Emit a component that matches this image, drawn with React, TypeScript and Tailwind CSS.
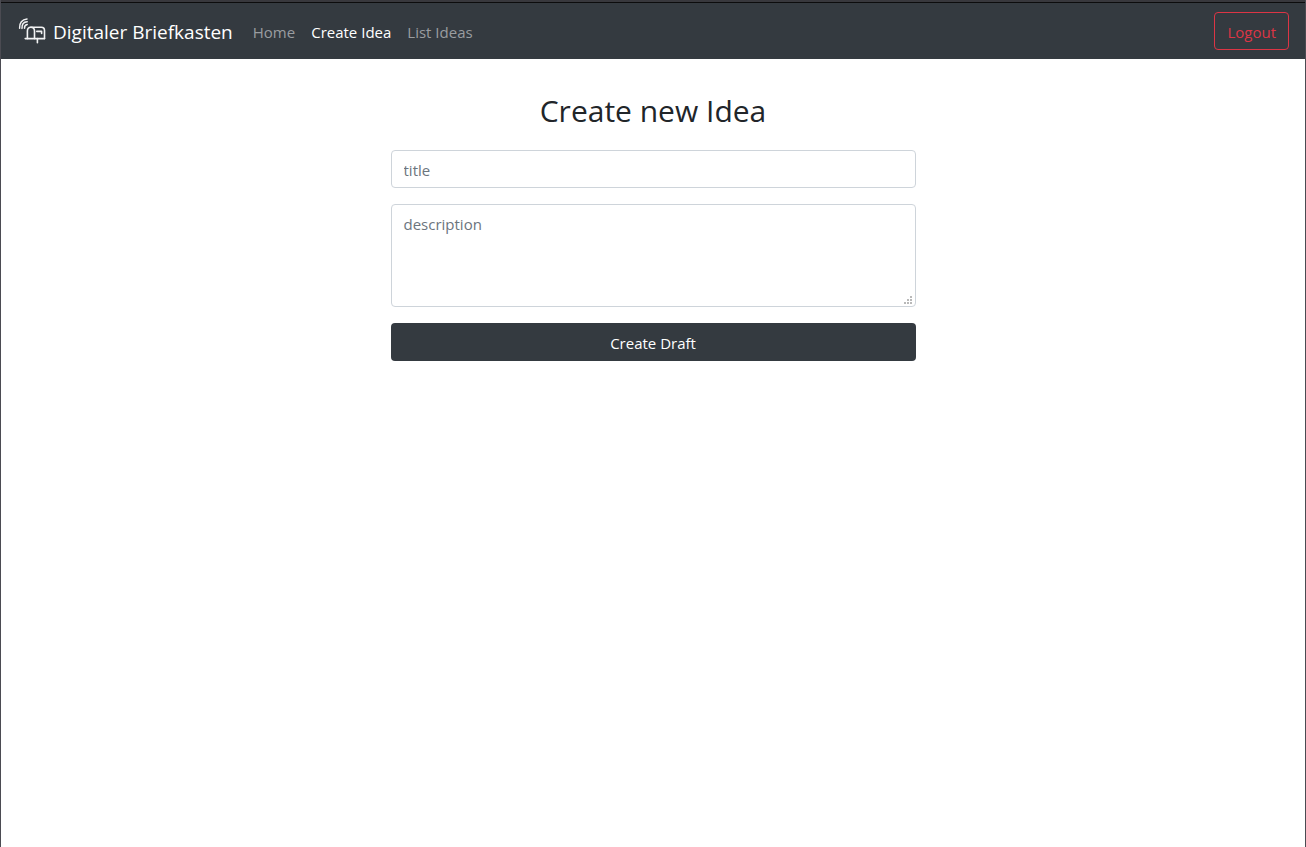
import React from "react";

function MailboxLogo() {
  return (
    <svg
      className="h-[30px] w-[30px] shrink-0"
      viewBox="0 0 30 30"
      fill="none"
      stroke="#f1f2f3"
      strokeLinecap="round"
      strokeLinejoin="round"
      aria-hidden="true"
    >
      <g strokeWidth="1.5">
        <path d="M2.6 12.2C2.2 7 5.2 3.3 10 3" />
        <path d="M5 12.4C4.8 8.6 6.8 6 10.2 5.8" />
        <path d="M7.5 12.2C7.4 10.2 8.4 8.8 10.2 8.5" />
      </g>
      <g strokeWidth="1.6">
        <path d="M10.4 22.6V15C10.4 12.6 11.8 11.2 13.8 11.2H24.4C26.4 11.2 27.5 12.6 27.5 14.6V22.6" />
        <path d="M13.8 11.2C16.2 11.2 17.5 12.6 17.5 15V22.6" />
        <path d="M8.2 22.6H27.5" />
        <path d="M20.4 22.6V26.8" />
        <path d="M19.8 15.4H24.6V17.4" />
      </g>
    </svg>
  );
}

const links = [
  { label: "Home", active: false },
  { label: "Create Idea", active: true },
  { label: "List Ideas", active: false },
];

export default function App() {
  return (
    <div className="flex min-h-screen flex-col border-x border-[#4b4b52] bg-white font-['Open_Sans','Noto_Sans',sans-serif] text-[15px] leading-6 text-[#212529]">
      <div className="h-[3px] border-b border-[#0c0c0d] bg-[#38383d]" />
      <nav className="flex h-14 items-center bg-[#343a40] px-4">
        <a href="#" className="mr-5 flex items-center gap-1.5 text-[19px] leading-[30px] text-white">
          <MailboxLogo />
          <span className="pt-0.5">Digitaler Briefkasten</span>
        </a>
        <ul className="flex gap-4 pt-0.5">
          {links.map((link) => (
            <li key={link.label}>
              <a
                href="#"
                aria-current={link.active ? "page" : undefined}
                className={link.active ? "text-white" : "text-[#9a9da0]"}
              >
                {link.label}
              </a>
            </li>
          ))}
        </ul>
        <button
          type="button"
          className="ml-auto h-[38px] rounded border border-[#dc3545] px-3 pt-0.5 text-[#dc3545]"
        >
          Logout
        </button>
      </nav>
      <main className="mx-auto w-full max-w-[525px] pt-8">
        <h1 className="mb-5 text-center text-[30px] leading-[39px]">Create new Idea</h1>
        <form className="flex flex-col gap-4">
          <input
            type="text"
            aria-label="title"
            placeholder="title"
            className="h-[38px] w-full rounded border border-[#ced4da] px-3 pt-1 pb-0.5 placeholder:text-[#6c757d]"
          />
          <div className="relative">
            <textarea
              aria-label="description"
              placeholder="description"
              className="block h-[103px] w-full resize-none rounded border border-[#ced4da] px-3 py-[7px] placeholder:text-[#6c757d]"
            />
            <svg
              className="pointer-events-none absolute right-1 bottom-[3px] h-2 w-2"
              viewBox="0 0 8 8"
              fill="#b9b9b9"
              aria-hidden="true"
            >
              <path d="M6 0h2v2H6zM3 3h2v2H3zM6 3h2v2H6zM0 6h2v2H0zM3 6h2v2H3zM6 6h2v2H6z" />
            </svg>
          </div>
          <button type="submit" className="h-[38px] w-full rounded bg-[#343a40] px-3 pt-0.5 text-white">
            Create Draft
          </button>
        </form>
      </main>
    </div>
  );
}
